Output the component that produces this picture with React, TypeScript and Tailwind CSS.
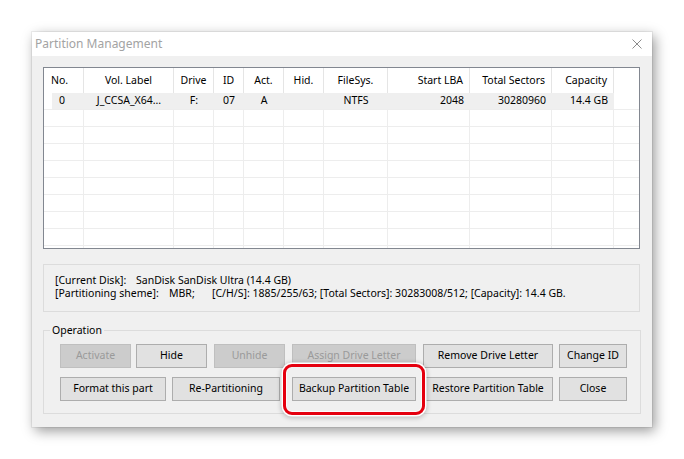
import React from "react";

type Col = { t: string; w: string; a: "l" | "c" | "r" };

const cols: Col[] = [
  { t: "No.", w: "w-[40px]", a: "l" },
  { t: "Vol. Label", w: "w-[90px]", a: "c" },
  { t: "Drive", w: "w-[40px]", a: "c" },
  { t: "ID", w: "w-[30px]", a: "c" },
  { t: "Act.", w: "w-[40px]", a: "c" },
  { t: "Hid.", w: "w-[40px]", a: "c" },
  { t: "FileSys.", w: "w-[64px]", a: "c" },
  { t: "Start LBA", w: "w-[82px]", a: "r" },
  { t: "Total Sectors", w: "w-[82px]", a: "r" },
  { t: "Capacity", w: "w-[62px]", a: "r" },
];

const row1: Col[] = [
  { t: "0", w: "w-[32px]", a: "l" },
  { t: "J_CCSA_X64...", w: "w-[90px]", a: "c" },
  { t: "F:", w: "w-[40px]", a: "c" },
  { t: "07", w: "w-[30px]", a: "c" },
  { t: "A", w: "w-[40px]", a: "c" },
  { t: "", w: "w-[40px]", a: "c" },
  { t: "NTFS", w: "w-[64px]", a: "c" },
  { t: "2048", w: "w-[82px]", a: "r" },
  { t: "30280960", w: "w-[82px]", a: "r" },
  { t: "14.4 GB", w: "w-[62px]", a: "r" },
];

function align(a: "l" | "c" | "r") {
  if (a === "l") return "justify-start pl-[7px]";
  if (a === "c") return "justify-center";
  return "justify-end pr-[6px]";
}

function Btn({
  label,
  w,
  ml,
  disabled,
}: {
  label: string;
  w: string;
  ml: string;
  disabled?: boolean;
}) {
  return (
    <div
      className={`${w} ${ml} h-[24px] border flex items-center justify-center whitespace-nowrap ${
        disabled
          ? "border-[#bfbfbf] bg-[#cccccc] text-[#9a9a9a]"
          : "border-[#adadad] bg-[#e1e1e1] text-black"
      }`}
    >
      {label}
    </div>
  );
}

export default function App() {
  const emptyRows = Array.from({ length: 9 });
  return (
    <div className="w-[684px] h-[459px] bg-white pt-[32px] pl-[32px] font-['Segoe_UI','Noto_Sans',sans-serif] text-[10.5px] text-black">
      <div className="w-[620px] h-[395px] flex flex-col bg-[#f0f0f0] shadow-[0_0_0_1px_rgba(0,0,0,0.06),3px_4px_12px_rgba(0,0,0,0.4)]">
        {/* Title bar */}
        <div className="h-[24px] shrink-0 bg-white flex items-center justify-between pl-[3px] pr-[10px]">
          <span className="text-[12px] text-[#a3a3a3] leading-none">Partition Management</span>
          <svg width="10" height="10" viewBox="0 0 10 10">
            <path d="M0.5 0.5 L9.5 9.5 M9.5 0.5 L0.5 9.5" stroke="#8c8c8c" strokeWidth="1" fill="none" />
          </svg>
        </div>

        {/* Body */}
        <div className="flex-1 px-[11px] pt-[11px]">
          {/* List view */}
          <div className="w-[597px] h-[182px] border border-[#828790] bg-white overflow-hidden">
            <div className="h-[25px] flex">
              {cols.map((c, i) => (
                <div
                  key={i}
                  className={`${c.w} h-[25px] border-r border-[#e5e5e5] flex items-center ${align(c.a)} whitespace-nowrap`}
                >
                  {c.t}
                </div>
              ))}
            </div>
            <div className="h-[17px] flex border-b border-[#ededed]">
              <div className="w-[8px] shrink-0" />
              <div className="w-[562px] flex bg-[#efefef]">
                {row1.map((c, i) => (
                  <div
                    key={i}
                    className={`${c.w} shrink-0 h-[16px] flex items-center ${align(c.a)} whitespace-nowrap`}
                  >
                    {c.t}
                  </div>
                ))}
              </div>
            </div>
            {emptyRows.map((_, r) => (
              <div key={r} className="h-[17px] flex border-b border-[#ededed]">
                {cols.map((c, i) => (
                  <div key={i} className={`${c.w} shrink-0 h-[16px] border-r border-[#ededed]`} />
                ))}
              </div>
            ))}
          </div>

          {/* Info box */}
          <div className="mt-[15px] w-[597px] h-[48px] border border-[#dcdcdc] pl-[11px] pt-[9px] leading-[13px] whitespace-nowrap">
            <div className="flex">
              <span className="shrink-0 min-w-[81px] pr-[4px]">[Current Disk]:</span>
              <span>SanDisk SanDisk Ultra (14.4 GB)</span>
            </div>
            <div className="flex">
              <span className="shrink-0 min-w-[114px] pr-[4px]">[Partitioning sheme]:</span>
              <span className="shrink-0 min-w-[43px] pr-[4px]">MBR;</span>
              <span>[C/H/S]: 1885/255/63; [Total Sectors]: 30283008/512; [Capacity]: 14.4 GB.</span>
            </div>
          </div>

          {/* Operation group */}
          <div className="relative mt-[18px] w-[598px] h-[84px] border border-[#dcdcdc] pt-[13px] pl-[16px]">
            <span className="absolute -top-[8px] left-[6px] px-[2px] bg-[#f0f0f0] leading-[15px]">
              Operation
            </span>
            <div className="flex">
              <Btn label="Activate" w="w-[71px]" ml="ml-0" disabled />
              <Btn label="Hide" w="w-[71px]" ml="ml-[5px]" />
              <Btn label="Unhide" w="w-[71px]" ml="ml-[7px]" disabled />
              <Btn label="Assign Drive Letter" w="w-[124px]" ml="ml-[7px]" disabled />
              <Btn label="Remove Drive Letter" w="w-[130px]" ml="ml-[7px]" />
              <Btn label="Change ID" w="w-[68px]" ml="ml-[6px]" />
            </div>
            <div className="flex mt-[9px]">
              <Btn label="Format this part" w="w-[106px]" ml="ml-0" />
              <Btn label="Re-Partitioning" w="w-[108px]" ml="ml-[6px]" />
              <Btn label="Backup Partition Table" w="w-[124px]" ml="ml-[12px]" />
              <Btn label="Restore Partition Table" w="w-[130px]" ml="ml-[7px]" />
              <Btn label="Close" w="w-[68px]" ml="ml-[6px]" />
            </div>
            <div className="absolute left-[239px] top-[33px] w-[142px] h-[51px] rounded-[9px] border-[3px] border-[#e5000f] pointer-events-none shadow-[0_0_0_1.5px_#ffffff,0_1px_5px_2px_rgba(0,0,0,0.22),inset_0_0_0_1px_rgba(255,255,255,0.8)]" />
          </div>
        </div>
      </div>
    </div>
  );
}
